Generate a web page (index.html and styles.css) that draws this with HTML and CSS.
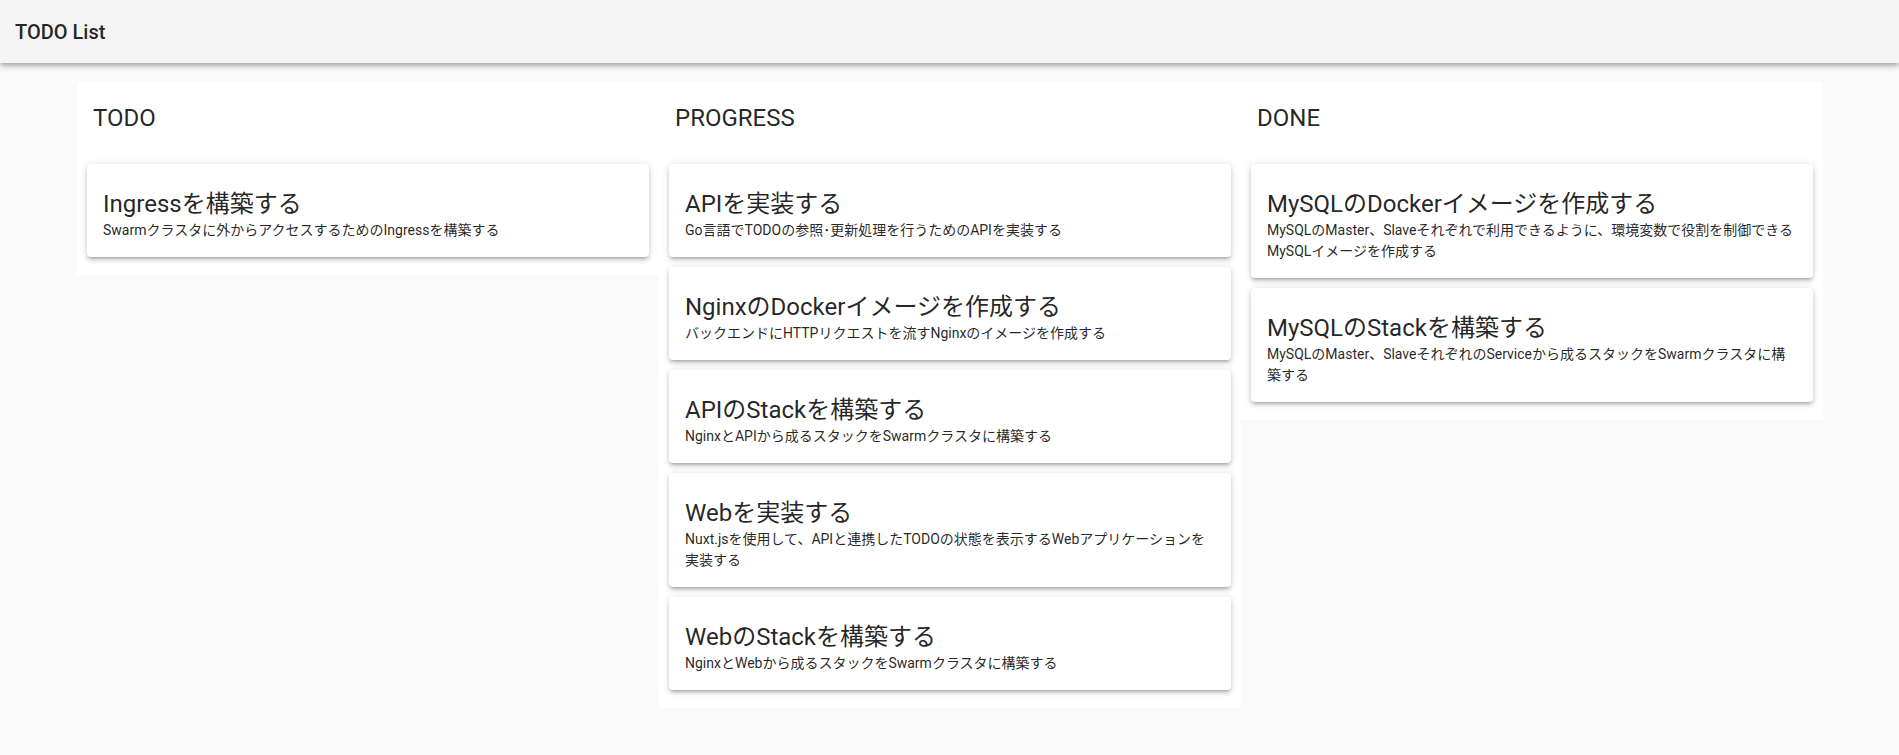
FILE: index.html
```html
<!DOCTYPE html>
<html lang="ja">
<head>
<meta charset="utf-8">
<title>TODO List</title>
<link rel="stylesheet" href="styles.css">
</head>
<body>
<header class="toolbar">
  <div class="toolbar-title">TODO List</div>
</header>
<main class="board">
  <section class="column">
    <h2 class="column-title">TODO</h2>
    <div class="card-list">
      <div class="card">
        <div class="card-title">Ingressを構築する</div>
        <div class="card-text">Swarmクラスタに外からアクセスするためのIngressを構築する</div>
      </div>
    </div>
  </section>
  <section class="column">
    <h2 class="column-title">PROGRESS</h2>
    <div class="card-list">
      <div class="card">
        <div class="card-title">APIを実装する</div>
        <div class="card-text">Go言語でTODOの参照･更新処理を行うためのAPIを実装する</div>
      </div>
      <div class="card">
        <div class="card-title">NginxのDockerイメージを作成する</div>
        <div class="card-text">バックエンドにHTTPリクエストを流すNginxのイメージを作成する</div>
      </div>
      <div class="card">
        <div class="card-title">APIのStackを構築する</div>
        <div class="card-text">NginxとAPIから成るスタックをSwarmクラスタに構築する</div>
      </div>
      <div class="card">
        <div class="card-title">Webを実装する</div>
        <div class="card-text">Nuxt.jsを使用して、APIと連携したTODOの状態を表示するWebアプリケーションを実装する</div>
      </div>
      <div class="card">
        <div class="card-title">WebのStackを構築する</div>
        <div class="card-text">NginxとWebから成るスタックをSwarmクラスタに構築する</div>
      </div>
    </div>
  </section>
  <section class="column">
    <h2 class="column-title">DONE</h2>
    <div class="card-list">
      <div class="card">
        <div class="card-title">MySQLのDockerイメージを作成する</div>
        <div class="card-text">MySQLのMaster、Slaveそれぞれで利用できるように、環境変数で役割を制御できるMySQLイメージを作成する</div>
      </div>
      <div class="card">
        <div class="card-title">MySQLのStackを構築する</div>
        <div class="card-text">MySQLのMaster、SlaveそれぞれのServiceから成るスタックをSwarmクラスタに構築する</div>
      </div>
    </div>
  </section>
</main>
</body>
</html>
```
FILE: styles.css
```css
* {
  box-sizing: border-box;
}

html, body {
  margin: 0;
  padding: 0;
}

body {
  background: #fafafa;
  font-family: "Roboto", "Noto Sans CJK JP", sans-serif;
  font-size: 14px;
  line-height: 1.5;
  color: rgba(0, 0, 0, 0.87);
  min-height: 755px;
}

.toolbar {
  height: 63px;
  background: #f5f5f5;
  display: flex;
  align-items: center;
  padding: 0 15px;
  box-shadow: 0 2px 4px -1px rgba(0, 0, 0, 0.2), 0 4px 5px 0 rgba(0, 0, 0, 0.14), 0 1px 10px 0 rgba(0, 0, 0, 0.12);
  position: relative;
  z-index: 2;
}

.toolbar-title {
  font-size: 20px;
  font-weight: 500;
  line-height: 1;
}

.board {
  width: 1747px;
  margin: 19px auto 0;
  padding-left: 1px;
  display: grid;
  grid-template-columns: repeat(3, 1fr);
  align-items: start;
}

.column {
  background: #ffffff;
  padding-bottom: 18px;
}

.column-title {
  margin: 0;
  padding: 20px 16px 30px;
  font-size: 24px;
  font-weight: 400;
  line-height: 32px;
}

.card-list {
  display: flex;
  flex-direction: column;
  gap: 10px;
  padding: 0 10px;
}

.card {
  background: #ffffff;
  border-radius: 4px;
  padding: 24px 16px 16px;
  box-shadow: 0 3px 3px -2px rgba(0, 0, 0, 0.2), 0 3px 4px 0 rgba(0, 0, 0, 0.14), 0 1px 8px 0 rgba(0, 0, 0, 0.12);
}

.card-title {
  font-size: 24px;
  font-weight: 400;
  line-height: 32px;
}

.card-text {
  font-size: 14px;
  line-height: 21px;
}
```
